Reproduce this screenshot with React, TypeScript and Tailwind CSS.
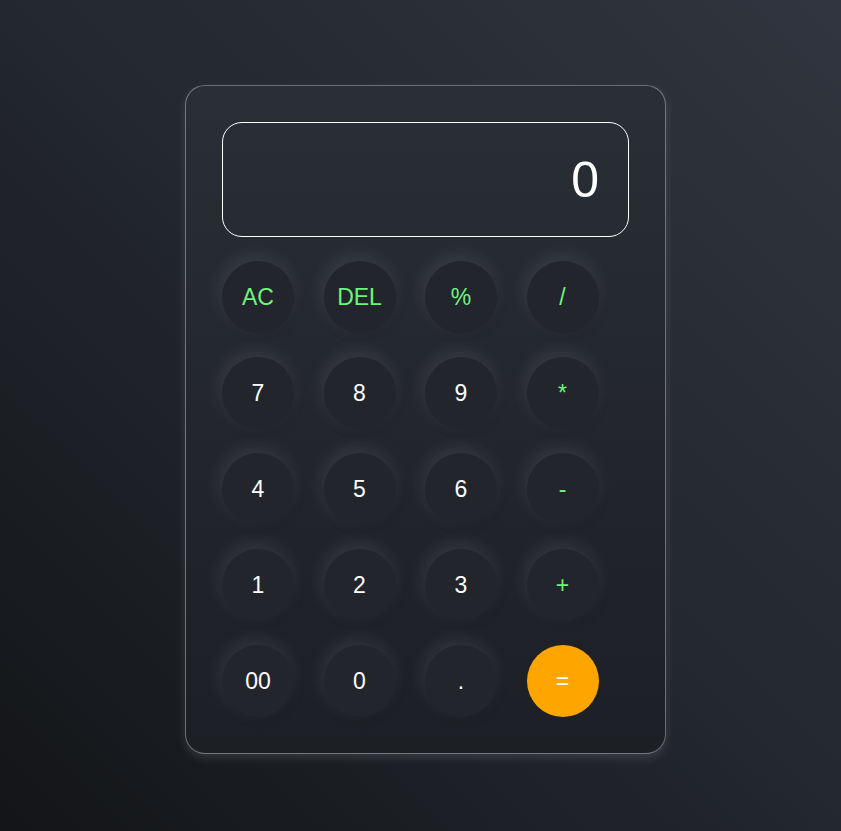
import React, { useState } from 'react';

const keys: { label: string; kind: 'op' | 'num' | 'eq' }[] = [
  { label: 'AC', kind: 'op' },
  { label: 'DEL', kind: 'op' },
  { label: '%', kind: 'op' },
  { label: '/', kind: 'op' },
  { label: '7', kind: 'num' },
  { label: '8', kind: 'num' },
  { label: '9', kind: 'num' },
  { label: '*', kind: 'op' },
  { label: '4', kind: 'num' },
  { label: '5', kind: 'num' },
  { label: '6', kind: 'num' },
  { label: '-', kind: 'op' },
  { label: '1', kind: 'num' },
  { label: '2', kind: 'num' },
  { label: '3', kind: 'num' },
  { label: '+', kind: 'op' },
  { label: '00', kind: 'num' },
  { label: '0', kind: 'num' },
  { label: '.', kind: 'num' },
  { label: '=', kind: 'eq' },
];

const App: React.FC = () => {
  const [value, setValue] = useState('0');

  const handleKey = (label: string) => {
    if (label === 'AC') return setValue('0');
    if (label === 'DEL') return setValue(prev => (prev.length > 1 ? prev.slice(0, -1) : '0'));
    if (label === '=') {
      try {
        // eslint-disable-next-line no-new-func
        const result = Function(`return (${value})`)();
        setValue(String(result));
      } catch {
        setValue('Error');
      }
      return;
    }
    setValue(prev => (prev === '0' && label !== '.' ? label : prev + label));
  };

  return (
    <div
      className="min-h-screen w-full bg-gradient-to-tr from-[#131518] via-[#23272e] to-[#30353f] flex justify-center pt-[85px] pl-[10px]"
      style={{ fontFamily: '"Liberation Sans", Arial, sans-serif' }}
    >
      <div className="w-[481px] h-[669px] rounded-[20px] border border-white/35 bg-gradient-to-b from-[#2a2e36] to-[#1c1f24] p-9 shadow-[0_4px_10px_rgba(255,255,255,0.12)]">
        <div className="h-[115px] rounded-[20px] border border-white flex items-center justify-end pr-[29px] text-white text-[50px] leading-none">
          {value}
        </div>
        <div className="mt-6 grid grid-cols-[repeat(4,72px)] gap-x-[29.5px] gap-y-6">
          {keys.map(k => (
            <button
              key={k.label}
              onClick={() => handleKey(k.label)}
              className={`w-[72px] h-[72px] rounded-full flex items-center justify-center text-[23px] ${
                k.kind === 'eq'
                  ? 'bg-[#ffa500] text-white'
                  : `bg-[#22252b] shadow-[-2px_-5px_18px_rgba(255,255,255,0.1),2px_4px_10px_rgba(0,0,0,0.12)] ${
                      k.kind === 'op' ? 'text-[#6ef47a]' : 'text-white'
                    }`
              }`}
            >
              {k.label}
            </button>
          ))}
        </div>
      </div>
    </div>
  );
};

export default App;
